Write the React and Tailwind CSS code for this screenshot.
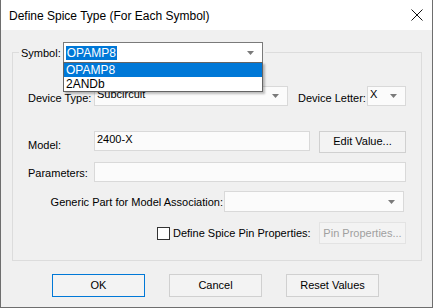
import React from "react";

const F = { fontFamily: '"Liberation Sans", Arial, sans-serif' };

function Arrow() {
  return (
    <svg width="7" height="4" viewBox="0 0 7 4" className="shrink-0">
      <path d="M0 0 H7 L3.5 4 Z" fill="#7a7a7a" />
    </svg>
  );
}

function Combo({ className = "", text = "", border = "border-[#d9d9d9]", children }) {
  return (
    <div className={`flex items-start justify-between border ${border} bg-[#fbfbfb] ${className}`}>
      <div className="pl-[2px] pt-[1px] leading-[13px]">{children ?? text}</div>
      <div className="pr-[8px] self-center">
        <Arrow />
      </div>
    </div>
  );
}

function Btn({ children, className = "", disabled = false }) {
  return (
    <div
      className={`flex items-center justify-center border ${
        disabled ? "border-[#e3e3e3] text-[#a0a0a0]" : "border-[#d0d0d0]"
      } bg-[#f3f3f3] ${className}`}
    >
      {children}
    </div>
  );
}

export default function App() {
  return (
    <div
      className="relative w-[433px] h-[308px] bg-[#f0f0f0] border border-t-0 border-[#6e6e6e] text-[11px] text-black overflow-hidden"
      style={F}
    >
      {/* title bar */}
      <div className="h-[30px] bg-white flex items-center justify-between pl-[8px] pr-[9px]">
        <span className="text-[12px] pt-[1px]" style={F}>Define Spice Type (For Each Symbol)</span>
        <svg width="12" height="12" viewBox="0 0 12 12">
          <path d="M0.5 0.5 L11.5 11.5 M11.5 0.5 L0.5 11.5" stroke="#111" strokeWidth="1" />
        </svg>
      </div>

      <div className="pl-[11px] pr-[10px]">
        <fieldset className="mt-[12px] border border-[#dcdcdc] h-[219px]">
          <legend className="ml-[6px] px-[2px] flex items-center">
            <span className="mr-[2px] mt-[2px]">Symbol:</span>
            <div className="w-[200px] h-[21px] border border-[#7a7a7a] bg-white flex items-center justify-between">
              <span className="ml-[2px] bg-[#0078d7] text-white text-[12px] leading-[14px] px-[1px]">OPAMP8</span>
              <div className="pr-[8px]">
                <Arrow />
              </div>
            </div>
          </legend>

          {/* Device type row */}
          <div className="mt-[23px] flex items-center pl-[15px]">
            <span className="w-[66px] mt-[4px]">Device Type:</span>
            <Combo className="w-[194px] h-[20px]" text="Subcircuit" />
            <span className="ml-[10px] w-[69px] mt-[4px]">Device Letter:</span>
            <Combo className="w-[39px] h-[20px]" text="X" />
          </div>

          {/* Model row */}
          <div className="mt-[24px] flex items-start pl-[15px]">
            <span className="w-[66px] mt-[6px]">Model:</span>
            <div className="w-[216px] h-[20px] border border-[#d9d9d9] bg-[#fbfbfb] pl-[2px] pt-[1px] leading-[13px]">
              2400-X
            </div>
            <Btn className="ml-[9px] w-[87px] h-[22px]">Edit Value...</Btn>
          </div>

          {/* Parameters row */}
          <div className="mt-[9px] flex items-center pl-[15px]">
            <span className="w-[66px] mt-[2px]">Parameters:</span>
            <div className="w-[312px] h-[20px] border border-[#d9d9d9] bg-[#fbfbfb]" />
          </div>

          {/* Generic part row */}
          <div className="mt-[9px] flex items-center">
            <span className="w-[211px] pr-[1px] text-right whitespace-nowrap mt-[1px]">
              Generic Part for Model Association:
            </span>
            <Combo className="w-[180px] h-[21px]" text="" />
          </div>

          {/* Checkbox row */}
          <div className="mt-[10px] flex items-center pl-[144px]">
            <div className="w-[13px] h-[13px] border border-[#333] bg-white" />
            <span className="ml-[3px] w-[146px] whitespace-nowrap">Define Spice Pin Properties:</span>
            <Btn className="w-[87px] h-[22px]" disabled>
              Pin Properties...
            </Btn>
          </div>
        </fieldset>
      </div>

      {/* bottom buttons */}
      <div className="mt-[13px] flex pl-[51px] gap-[24px]">
        <Btn className="w-[93px] h-[23px] !border-[#0078d7]">OK</Btn>
        <Btn className="w-[93px] h-[23px]">Cancel</Btn>
        <Btn className="w-[93px] h-[23px]">Reset Values</Btn>
      </div>

      {/* dropdown list */}
      <div className="absolute left-[62px] top-[62px] w-[200px] h-[30px] border border-[#646464] bg-white shadow-[2px_2px_2px_rgba(0,0,0,0.25)] text-[12px]">
        <div className="h-[14px] bg-[#0078d7] text-white pl-[2px] leading-[14px]">OPAMP8</div>
        <div className="h-[14px] pl-[2px] leading-[14px]">2ANDb</div>
      </div>
    </div>
  );
}
